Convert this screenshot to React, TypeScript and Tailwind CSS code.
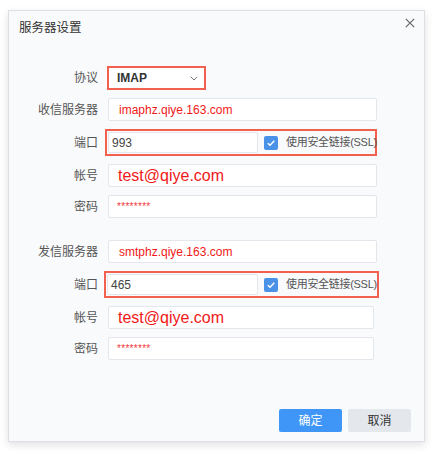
import React from "react";

const font = { fontFamily: '"Liberation Sans", "Noto Sans CJK SC", sans-serif' };

function Label({ children }: { children: React.ReactNode }) {
  return (
    <div className="w-[99px] shrink-0 whitespace-nowrap pr-[10px] text-right text-[12px] text-[#555]">{children}</div>
  );
}

function Input({ w, children, size = "host" }: { w: string; children: React.ReactNode; size?: string }) {
  const txt =
    size === "acct"
      ? "text-[16px] pl-[9px] text-[#f01818]"
      : size === "pwd"
      ? "text-[10px] pl-[8px] text-[#f03a3a] tracking-[0.3px]"
      : "text-[12px] pl-[10px] text-[#f01818]";
  return (
    <div className={`${w} flex h-[23px] shrink-0 items-center rounded-[2px] border border-[#e3e6eb] bg-white ${txt}`}>
      {children}
    </div>
  );
}

function Check() {
  return (
    <div className="flex h-[14px] w-[14px] items-center justify-center rounded-[2px] bg-[#4a92e8]">
      <svg width="10" height="10" viewBox="0 0 10 10">
        <path d="M1.8 5.2 L4 7.3 L8.3 2.8" fill="none" stroke="white" strokeWidth="1.5" />
      </svg>
    </div>
  );
}

function PortRow({ port, boxW, inputW, ml }: { port: string; boxW: string; inputW: string; ml: string }) {
  return (
    <div className="flex items-center">
      <Label>端口</Label>
      <div className={`${ml} ${boxW} flex h-[27px] shrink-0 items-center border-2 border-[#f2604f] pl-[1px]`}>
        <div className={`${inputW} flex h-[21px] shrink-0 items-center rounded-[2px] border border-[#e3e6eb] bg-white pl-[3px] text-[12px] text-[#444]`}>
          {port}
        </div>
        <div className="ml-[6px]">
          <Check />
        </div>
        <div className="ml-[8px] whitespace-nowrap text-[11px] tracking-[-0.3px] text-[#555]">使用安全链接(SSL)</div>
      </div>
    </div>
  );
}

export default function App() {
  return (
    <div className="h-[457px] w-[435px] bg-white" style={font}>
      <div className="ml-[8px] pt-[10px]">
        <div className="flex h-[432px] w-[417px] flex-col border border-[#dcdfe4] bg-[#f9fafc] shadow-[0_3px_8px_rgba(0,0,0,0.12)]">
          <div className="flex h-[34px] items-center justify-between pl-[10px] pr-[9px]">
            <div className="text-[12.5px] text-[#333]">服务器设置</div>
            <svg width="10" height="10" viewBox="0 0 10 10" className="mb-[10px]">
              <path d="M0.8 0.8 L9.2 9.2 M9.2 0.8 L0.8 9.2" stroke="#666" strokeWidth="1.2" />
            </svg>
          </div>

          <div className="mt-[21px] flex flex-col gap-[8px]">
            <div className="flex items-center">
              <Label>协议</Label>
              <div className="-ml-[1px] flex h-[24px] w-[99px] shrink-0 items-center justify-between border-2 border-[#f2604f] bg-white pl-[8px] pr-[6px]">
                <span className="text-[12px] font-bold text-[#333]">IMAP</span>
                <svg width="8" height="5" viewBox="0 0 8 5">
                  <path d="M0.8 0.8 L4 4 L7.2 0.8" fill="none" stroke="#777" strokeWidth="1" />
                </svg>
              </div>
            </div>
            <div className="flex items-center">
              <Label>收信服务器</Label>
              <Input w="w-[269px]">imaphz.qiye.163.com</Input>
            </div>
            <PortRow port="993" boxW="w-[272px]" inputW="w-[150px]" ml="-ml-[3px]" />
            <div className="flex items-center">
              <Label>帐号</Label>
              <Input w="w-[269px]" size="acct">test@qiye.com</Input>
            </div>
            <div className="flex items-center">
              <Label>密码</Label>
              <Input w="w-[269px]" size="pwd">********</Input>
            </div>
          </div>

          <div className="mt-[22px] flex flex-col gap-[8px]">
            <div className="flex items-center">
              <Label>发信服务器</Label>
              <Input w="w-[269px]">smtphz.qiye.163.com</Input>
            </div>
            <PortRow port="465" boxW="w-[275px]" inputW="w-[151px]" ml="-ml-[4px]" />
            <div className="flex items-center">
              <Label>帐号</Label>
              <Input w="w-[266px]" size="acct">test@qiye.com</Input>
            </div>
            <div className="flex items-center">
              <Label>密码</Label>
              <Input w="w-[266px]" size="pwd">********</Input>
            </div>
          </div>

          <div className="mt-auto flex justify-end gap-[6px] pb-[9px] pr-[13px]">
            <div className="flex h-[23px] w-[63px] items-center justify-center rounded-[2px] bg-[#4096f7] text-[12px] text-white">
              确定
            </div>
            <div className="flex h-[23px] w-[63px] items-center justify-center rounded-[2px] bg-[#e4e7ec] text-[12px] text-[#333]">
              取消
            </div>
          </div>
        </div>
      </div>
    </div>
  );
}
